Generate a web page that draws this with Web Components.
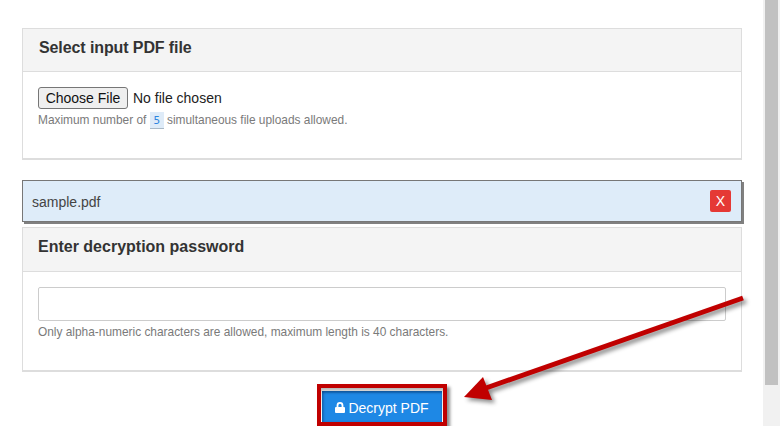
<!DOCTYPE html>
<html>
<head>
<meta charset="utf-8">
<title>Decrypt PDF</title>
<style>
  html, body { margin: 0; height: 426px; overflow: hidden; background: #fff; }
  body { font-family: "Liberation Sans", Arial, sans-serif; color: #333; }
</style>
</head>
<body>
<pdf-page>
  <pdf-card heading="Select input PDF file" height="132" head-left="16" head-height="42" tight>
    <file-picker></file-picker>
  </pdf-card>
  <file-banner name="sample.pdf"></file-banner>
  <pdf-card heading="Enter decryption password" height="145" head-left="15" head-height="43">
    <password-field></password-field>
  </pdf-card>
  <decrypt-button>Decrypt PDF</decrypt-button>
</pdf-page>
<script>
class PdfPage extends HTMLElement {
  constructor() {
    super();
    this.attachShadow({ mode: 'open' });
  }

  connectedCallback() {
    this.shadowRoot.innerHTML = `
      <style>
        :host { display: flex; height: 426px; position: relative; overflow: hidden; }
        .content { width: 720px; margin-left: 22px; padding-top: 28px; }
        .spacer { flex: 1; }
        .track { width: 17px; height: 426px; background: #f1f1f1; padding-left: 2px; box-sizing: border-box; }
        .thumb { width: 13px; height: 385px; background: #c1c1c1; }
        svg { position: absolute; left: 0; top: 0; }
      </style>
      <div class="content"><slot></slot></div>
      <div class="spacer"></div>
      <div class="track"><div class="thumb"></div></div>
      <svg width="780" height="426" viewBox="0 0 780 426" style="filter: drop-shadow(3px 3px 2px rgba(0,0,0,.45))">
        <path d="M743 298 L486 388" stroke="#c00000" stroke-width="5" fill="none"/>
        <path d="M464 397 L483 377 L492 400 Z" fill="#c00000"/>
      </svg>
    `;
  }
}

class PdfCard extends HTMLElement {
  constructor() {
    super();
    this.attachShadow({ mode: 'open' });
  }

  connectedCallback() {
    const left = this.getAttribute('head-left') || 15;
    const headHeight = this.getAttribute('head-height') || 42;
    const spacing = this.hasAttribute('tight') ? '-0.1px' : 'normal';
    this.shadowRoot.innerHTML = `
      <style>
        :host { display: block; box-sizing: border-box; height: ${this.getAttribute('height')}px; border: 1px solid #ddd; border-bottom-width: 2px; }
        .head { height: ${headHeight}px; line-height: 38px; padding-left: ${left}px; background: #f4f4f4; border-bottom: 1px solid #ddd; font-size: 16px; font-weight: bold; color: #333; letter-spacing: ${spacing}; }
        .body { padding: 15px 15px 0; }
      </style>
      <div class="head">${this.getAttribute('heading')}</div>
      <div class="body"><slot></slot></div>
    `;
  }
}

class FilePicker extends HTMLElement {
  constructor() {
    super();
    this.attachShadow({ mode: 'open' });
  }

  connectedCallback() {
    this.shadowRoot.innerHTML = `
      <style>
        :host { display: block; }
        .row { display: flex; align-items: center; height: 22px; font-size: 14px; color: #222; }
        button { width: 90px; height: 22px; padding: 0; margin-right: 5px; font: 14px "Liberation Sans", Arial, sans-serif; color: #111; background: #efefef; border: 1px solid #767676; border-radius: 3px; }
        .help { margin-top: 3px; font-size: 11.9px; line-height: 16px; color: #7a7a7a; white-space: nowrap; }
        code { display: inline-block; width: 14px; height: 17px; text-align: center; vertical-align: top; font: 11px/17px "DejaVu Sans Mono", monospace; color: #2e86e0; background: #deebf8; border-bottom: 1px solid #a9b8c6; box-sizing: border-box; }
      </style>
      <div class="row"><button>Choose File</button><span>No file chosen</span></div>
      <div class="help">Maximum number of <code>5</code> simultaneous file uploads allowed.</div>
    `;
  }
}

class FileBanner extends HTMLElement {
  constructor() {
    super();
    this.attachShadow({ mode: 'open' });
  }

  connectedCallback() {
    this.shadowRoot.innerHTML = `
      <style>
        :host { display: flex; align-items: center; justify-content: space-between; box-sizing: border-box; height: 42px; margin: 20px 0 5px; padding: 0 10px 0 9px; background: #deecf9; border: 1px solid #777; box-shadow: 2px 2px 0 #808080; font-size: 14px; color: #444; }
        .name { padding-top: 1px; }
        .x { width: 21px; height: 22px; line-height: 22px; text-align: center; background: #e53935; border-radius: 2px; color: #fff; font-size: 14px; }
      </style>
      <span class="name">${this.getAttribute('name')}</span>
      <span class="x">X</span>
    `;
  }
}

class PasswordField extends HTMLElement {
  constructor() {
    super();
    this.attachShadow({ mode: 'open' });
  }

  connectedCallback() {
    this.shadowRoot.innerHTML = `
      <style>
        :host { display: block; }
        input { display: block; width: 100%; height: 34px; box-sizing: border-box; padding: 0; border: 1px solid #ccc; border-radius: 2px; background: #fff; outline: none; }
        .help { margin-top: 3px; font-size: 11.9px; line-height: 16px; color: #7a7a7a; white-space: nowrap; }
      </style>
      <input type="password">
      <div class="help">Only alpha-numeric characters are allowed, maximum length is 40 characters.</div>
    `;
  }
}

class DecryptButton extends HTMLElement {
  constructor() {
    super();
    this.attachShadow({ mode: 'open' });
  }

  connectedCallback() {
    this.shadowRoot.innerHTML = `
      <style>
        :host { display: block; width: 130px; height: 42px; box-sizing: border-box; margin: 12px 0 0 295px; padding: 3px 1px 0 1px; border: 4px solid #c00000; box-shadow: 3px 3px 3px rgba(0,0,0,.45); background: linear-gradient(#b4b4b4, #e4e4e4 4px, #fff); }
        .btn { display: flex; align-items: center; justify-content: center; gap: 3px; box-sizing: border-box; height: 100%; padding-top: 2px; background: #1e88e5; color: #fff; font-size: 14px; box-shadow: inset 0 2px 2px rgba(0,40,90,.45), inset 2px 0 2px rgba(0,40,90,.25); }
        svg { display: block; margin-top: -1px; }
      </style>
      <div class="btn">
        <svg width="10" height="11" viewBox="0 0 10 11"><path d="M1.6 5V3.4a3.4 3.4 0 0 1 6.8 0V5H9a1 1 0 0 1 1 1v4a1 1 0 0 1-1 1H1a1 1 0 0 1-1-1V6a1 1 0 0 1 1-1zM3.4 5h3.2V3.4a1.6 1.6 0 0 0-3.2 0z" fill="#fff"/></svg>
        <span><slot></slot></span>
      </div>
    `;
  }
}

customElements.define('pdf-page', PdfPage);
customElements.define('pdf-card', PdfCard);
customElements.define('file-picker', FilePicker);
customElements.define('file-banner', FileBanner);
customElements.define('password-field', PasswordField);
customElements.define('decrypt-button', DecryptButton);
</script>
</body>
</html>
